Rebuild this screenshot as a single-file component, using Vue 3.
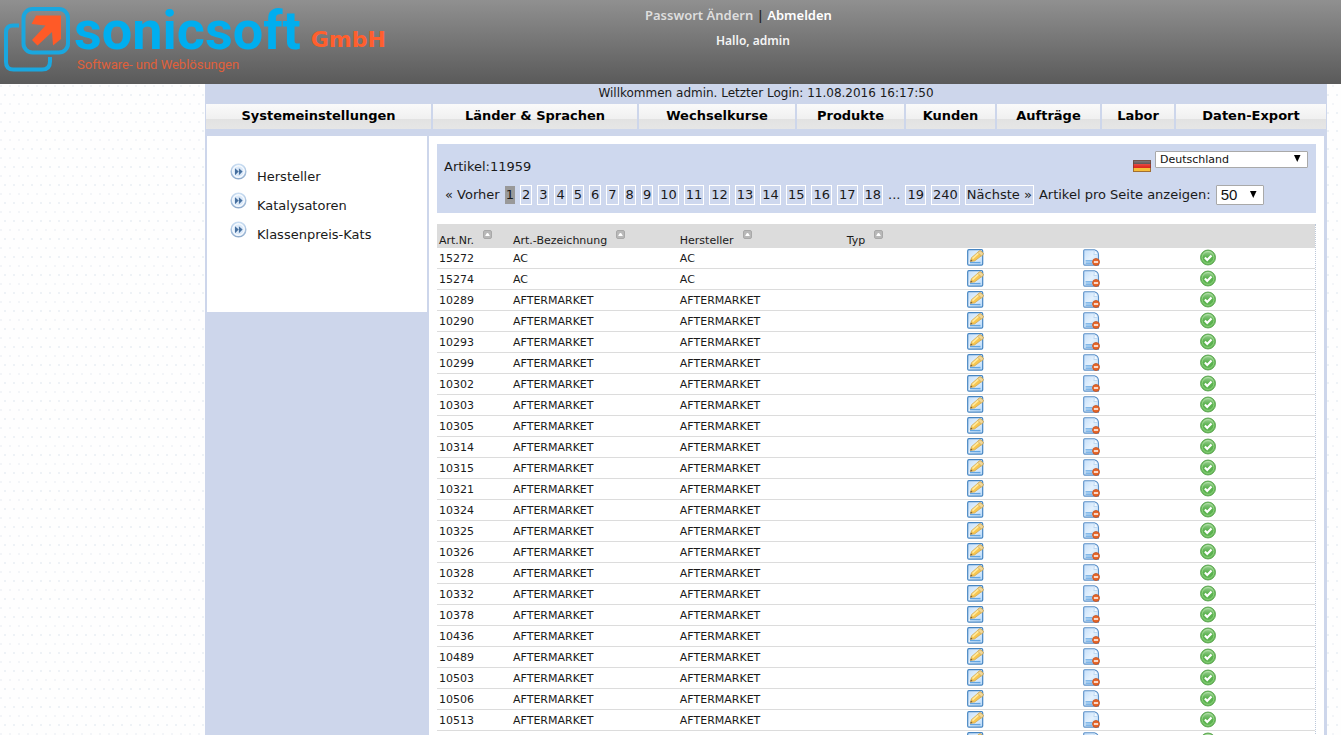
<script setup>
import { ref } from 'vue'

const nav = [
  'Systemeinstellungen', 'Länder & Sprachen', 'Wechselkurse', 'Produkte',
  'Kunden', 'Aufträge', 'Labor', 'Daten-Export',
]
const side = ['Hersteller', 'Katalysatoren', 'Klassenpreis-Kats']
const pages = Array.from({ length: 17 }, (_, i) => i + 2)
const columns = ['Art.Nr.', 'Art.-Bezeichnung', 'Hersteller', 'Typ']
const country = ref('Deutschland')
const perPage = ref('50')
const ids = [
  15272, 15274, 10289, 10290, 10293, 10299, 10302, 10303, 10305, 10314, 10315, 10321,
  10324, 10325, 10326, 10328, 10332, 10378, 10436, 10489, 10503, 10506, 10513, 10516,
]
const rows = ids.map((id, i) => ({ id, name: i < 2 ? 'AC' : 'AFTERMARKET' }))
</script>

<template>
  <div class="page">
    <svg class="defs" width="0" height="0" aria-hidden="true">
      <defs>
        <linearGradient id="paper" x1="0" y1="0" x2="1" y2="1">
          <stop offset="0" stop-color="#c3defa" />
          <stop offset="0.5" stop-color="#e4f1fd" />
          <stop offset="1" stop-color="#b5d7f8" />
        </linearGradient>
        <linearGradient id="ring" x1="0" y1="0" x2="0" y2="1">
          <stop offset="0" stop-color="#c9ddf2" />
          <stop offset="1" stop-color="#8fabcc" />
        </linearGradient>
        <linearGradient id="gloss" x1="0" y1="0" x2="0" y2="1">
          <stop offset="0" stop-color="#fff" stop-opacity="0.4" />
          <stop offset="1" stop-color="#fff" stop-opacity="0" />
        </linearGradient>
        <symbol id="i-edit" viewBox="0 0 17 17">
          <rect x="0.7" y="0.7" width="15" height="15.4" rx="1.2" fill="url(#paper)" stroke="#4685c2" stroke-width="1.2" />
          <path d="M3 13.6h10.5" stroke="#62a5e2" stroke-width="1.4" />
          <path d="M3.2 12.4 4.6 8.6 12 2.2q1-.8 2 0l1.9 1.6q.9 1 0 1.9L7.6 12z" fill="#f7c652" stroke="#c39a48" stroke-width="0.6" />
          <path d="m5.5 9.6 7.2-6.5" stroke="#ffeaa0" stroke-width="1.6" />
          <path d="m12 2.2q1-.8 2 0l1.9 1.6q.9 1 0 1.900l-1.500 1.200-3.600-3.400z" fill="#f0d79a" stroke="#c39a48" stroke-width="0.5" />
          <path d="m3.200 12.400.800-2 1.500 1.600z" fill="#6a5840" />
        </symbol>
        <symbol id="i-delete" viewBox="0 0 17 17">
          <path d="M1.6.7h9.700q4.200 1 4.200 5.200v10.200H1.600q-.9 0-.9-1V1.700q0-1 .9-1z" fill="url(#paper)" stroke="#5b90c8" stroke-width="1.1" />
          <path d="M11 1.200q.7 2-.2 4.500 2.500-.8 4.200.2" fill="#f5faff" stroke="#a9cbec" stroke-width="0.700" />
          <path d="M2.500 11.800h7M2.500 14.200h6.500" stroke="#62a5e2" stroke-width="1.200" />
          <circle cx="13" cy="13" r="3.500" fill="#e8662a" stroke="#bd5222" stroke-width="0.800" />
          <path d="M10.900 13h4.200" stroke="#fff" stroke-width="1.500" />
        </symbol>
        <symbol id="i-ok" viewBox="0 0 17 17">
          <circle cx="8" cy="8.500" r="7.500" fill="#62b852" stroke="#5aa350" stroke-width="0.900" />
          <circle cx="8" cy="8.500" r="5.900" fill="#5cb250" stroke="#92d583" stroke-width="0.900" />
          <path d="M1.700 8a6.300 6.300 0 0 1 12.600 0z" fill="url(#gloss)" />
          <path d="m4.900 8.500 2.300 2.400 4.300-4.500" fill="none" stroke="#fff" stroke-width="2.200" />
        </symbol>
        <symbol id="i-next" viewBox="0 0 17 17">
          <circle cx="8.500" cy="8.500" r="7.300" fill="#eaf3fd" stroke="url(#ring)" stroke-width="1.500" />
          <circle cx="8.500" cy="8.500" r="5.600" fill="#dbe9f9" stroke="#fff" stroke-width="1" />
          <path d="M5 5.200 8.700 8.600 5 12.200zM8.900 5.200l3.700 3.400-3.700 3.600z" fill="#47709f" />
        </symbol>
        <symbol id="i-sort" viewBox="0 0 9 9">
          <rect x="0.500" y="0.500" width="8" height="8" rx="1.500" fill="#b8b8b8" stroke="#a8a8a8" />
          <path d="M2.700 5.500 4.500 3l1.800 2.500z" fill="#fff" stroke="#fff" />
        </symbol>
      </defs>
    </svg>

    <header class="top">
      <div class="logo">
        <svg class="mark" viewBox="0 0 74 74" aria-hidden="true">
          <path d="M19 25.500h-6q-7 0-7 7V62q0 7.500 7.500 7.500H42q8 0 8-8V57" fill="none" stroke="#1aa7df" stroke-width="4" />
          <rect x="23.500" y="9" width="44.500" height="43.500" rx="9" fill="none" stroke="#1aa7df" stroke-width="4" />
          <path d="M36 15.500H61V39L53 45.500 52 32 37.500 45.500 32 40 45.500 25.500 31.500 24z" fill="#ff5a27" />
        </svg>
        <div class="words">
          <div class="name"><span class="brand">sonicsoft</span><span class="legal">GmbH</span></div>
          <div class="tag">Software- und Weblösungen</div>
        </div>
      </div>
      <div class="user">
        <div><a class="pw" href="#">Passwort Ändern</a> <span class="bar">|</span> <a class="out" href="#">Abmelden</a></div>
        <div class="hello">Hallo, admin</div>
      </div>
    </header>

    <div class="shell">
      <div class="welcome">Willkommen admin. Letzter Login: 11.08.2016 16:17:50</div>
      <nav class="nav">
        <a v-for="n in nav" :key="n" href="#">{{ n }}</a>
      </nav>
      <div class="body">
        <aside class="side">
          <ul>
            <li v-for="s in side" :key="s">
              <svg class="next" aria-hidden="true"><use href="#i-next" /></svg>
              <a href="#">{{ s }}</a>
            </li>
          </ul>
        </aside>
        <main class="main">
          <section class="filter">
            <div class="line">
              <span>Artikel:11959</span>
              <div class="country">
                <svg class="flag" viewBox="0 0 18 12" role="img" aria-label="Deutschland">
                  <rect width="18" height="12" fill="#3d3232" />
                  <rect y="4" width="18" height="4" fill="#df2a20" />
                  <rect y="8" width="18" height="4" fill="#f6bd3a" />
                  <rect width="18" height="7" fill="url(#gloss)" />
                  <rect x="0.500" y="0.500" width="17" height="11" fill="none" stroke="#6b3a2c" stroke-opacity="0.600" />
                </svg>
                <span class="pick wide">
                  <select v-model="country" aria-label="Land">
                    <option>Deutschland</option>
                  </select>
                  <svg viewBox="0 0 8 8" aria-hidden="true"><path d="M1 0h6.500L4.250 7z" /></svg>
                </span>
              </div>
            </div>
            <div class="pager">
              <span class="prev">« Vorher</span>
              <span class="cur">1</span>
              <a v-for="p in pages" :key="p" href="#">{{ p }}</a>
              <span>...</span>
              <a href="#">19</a>
              <a href="#">240</a>
              <a href="#">Nächste »</a>
              <span class="per">
                <label for="per">Artikel pro Seite anzeigen:</label>
                <span class="pick">
                  <select id="per" v-model="perPage">
                    <option>50</option>
                  </select>
                  <svg viewBox="0 0 8 8" aria-hidden="true"><path d="M1 0h6.500L4.250 7z" /></svg>
                </span>
              </span>
            </div>
          </section>
          <table class="list">
            <colgroup>
              <col class="c-id"><col class="c-name"><col class="c-name"><col class="c-typ"><col class="c-act"><col class="c-act"><col>
            </colgroup>
            <thead>
              <tr>
                <th v-for="c in columns" :key="c">{{ c }}<svg class="sort" aria-hidden="true"><use href="#i-sort" /></svg></th>
                <th></th><th></th><th></th>
              </tr>
            </thead>
            <tbody>
              <tr v-for="r in rows" :key="r.id">
                <td class="txt">{{ r.id }}</td>
                <td class="txt">{{ r.name }}</td>
                <td class="txt">{{ r.name }}</td>
                <td></td>
                <td><a href="#" aria-label="Bearbeiten"><svg class="ico"><use href="#i-edit" /></svg></a></td>
                <td><a href="#" aria-label="Löschen"><svg class="ico"><use href="#i-delete" /></svg></a></td>
                <td><a href="#" aria-label="Aktiv"><svg class="ico"><use href="#i-ok" /></svg></a></td>
              </tr>
            </tbody>
          </table>
        </main>
      </div>
    </div>
  </div>
</template>

<style>
body { overflow: hidden; }
</style>

<style scoped>
.page {
  display: flex;
  flex-direction: column;
  min-height: 100vh;
  font: 13px/16px "DejaVu Sans", Verdana, sans-serif;
  color: #1a1a1a;
  background:
    radial-gradient(circle at 5px 5px, #eef2f6 0 1px, transparent 1px) 0 0 / 9px 18px,
    radial-gradient(circle at 1px 5px, #f3f5f8 0 1px, transparent 1px) 0 9px / 9px 18px,
    #fefefe;
}
.defs { position: absolute; }
a { color: inherit; text-decoration: none; }

.top {
  display: flex;
  height: 84px;
  background: linear-gradient(#909090, #5a5a5a);
}
.logo { display: flex; width: 645px; }
.mark { width: 74px; height: 74px; flex: none; }
.name { display: flex; align-items: flex-start; height: 57px; }
.brand {
  font: 700 54px/62px Roboto, sans-serif;
  color: #00aeef;
}
.legal { margin-left: 10px; font-size: 22px; line-height: 80px; font-weight: 700; color: #ff5f2e; }
.tag { margin-left: 3px; font: 13px/16px Roboto, sans-serif; color: #e0603a; }
.user { padding-top: 6px; font: 600 13px/18px "Noto Sans", sans-serif; color: #f4f4f4; }
.pw { color: #dedede; }
.bar { color: #222; }
.out { color: #fff; }
.hello { margin-top: 8px; padding-left: 71px; font-size: 12px; }

.shell {
  flex: 1;
  display: flex;
  flex-direction: column;
  margin: 0 14px 0 205px;
  background: #cdd6eb;
}
.welcome { height: 19px; line-height: 18px; text-align: center; font-size: 12px; }
.nav { display: flex; gap: 2px; padding: 0 1px; margin-top: 1px; height: 25px; }
.nav a {
  flex: 1 1 0;
  text-align: center;
  font-weight: 700;
  line-height: 24px;
  color: #000;
  white-space: nowrap;
  background: linear-gradient(#fafafa, #f0f0f0 60%, #e2e2e2 62%, #e6e6e6);
}
.nav a:nth-child(1) { flex-grow: 225; }
.nav a:nth-child(2) { flex-grow: 204; }
.nav a:nth-child(3) { flex-grow: 156; }
.nav a:nth-child(4) { flex-grow: 107; }
.nav a:nth-child(5) { flex-grow: 89; }
.nav a:nth-child(6) { flex-grow: 103; }
.nav a:nth-child(7) { flex-grow: 72; }
.nav a:nth-child(8) { flex-grow: 150; }

.body { flex: 1; display: flex; gap: 2px; margin: 7px 3px 0 2px; }
.side { flex: none; align-self: flex-start; width: 220px; min-height: 176px; background: #fff; }
.side ul { list-style: none; margin: 0; padding: 27px 0 0 23px; }
.side li { display: flex; gap: 10px; height: 29px; }
.side li a { padding-top: 6px; }
.next { width: 17px; height: 17px; }

.main { flex: 1; padding: 8px; background: #fff; }
.filter { height: 69px; background: #ced8ee; }
.line { display: flex; justify-content: space-between; height: 41px; padding: 0 8px 0 7px; }
.line > span { padding-top: 15px; }
.country { display: flex; gap: 4px; padding-top: 7px; }
.flag { width: 18px; height: 12px; margin-top: 9px; }
.pick { position: relative; display: inline-flex; height: 20px; }
.pick select {
  appearance: none;
  width: 48px;
  padding: 0 4px;
  border: 1px solid #a9a9a9;
  border-radius: 1px;
  background: #fff;
  font: 15px/18px "Liberation Sans", Arial, sans-serif;
  color: #111;
}
.pick svg { position: absolute; right: 7px; top: 6px; width: 8px; height: 8px; pointer-events: none; }
.wide { height: 17px; }
.wide select { width: 153px; font: 11px/15px "DejaVu Sans", Verdana, sans-serif; }
.wide svg { top: 4px; }
.pager { display: flex; align-items: center; gap: 5px; height: 20px; padding-left: 8px; white-space: nowrap; }
.pager > a { border: 1px solid #fff; padding: 0 1px; line-height: 18px; }
.cur { padding: 0 1px; line-height: 18px; background: #999; }
.per { display: flex; align-items: center; gap: 5px; }

.list {
  width: 100%;
  margin-top: 11px;
  table-layout: fixed;
  border-collapse: separate;
  border-spacing: 0;
  border-right: 1px dotted #bcc8da;
  font-size: 11px;
}
.c-id { width: 74px; }
.c-name { width: 19%; }
.c-typ { width: 120px; }
.c-act { width: 13.3%; }
.list th {
  height: 22px;
  padding: 1px 2px;
  text-align: left;
  vertical-align: bottom;
  font-weight: 400;
  line-height: 13px;
  background: #dcdcdc;
}
.sort { width: 9px; height: 9px; margin-left: 9px; vertical-align: 5px; }
.list td { height: 20px; padding: 0 2px; vertical-align: top; border-bottom: 1px solid #dcdcdc; }
.list .txt { height: 18px; padding-top: 2px; line-height: 18px; }
.ico { display: block; width: 17px; height: 17px; margin-top: 1px; }
</style>
